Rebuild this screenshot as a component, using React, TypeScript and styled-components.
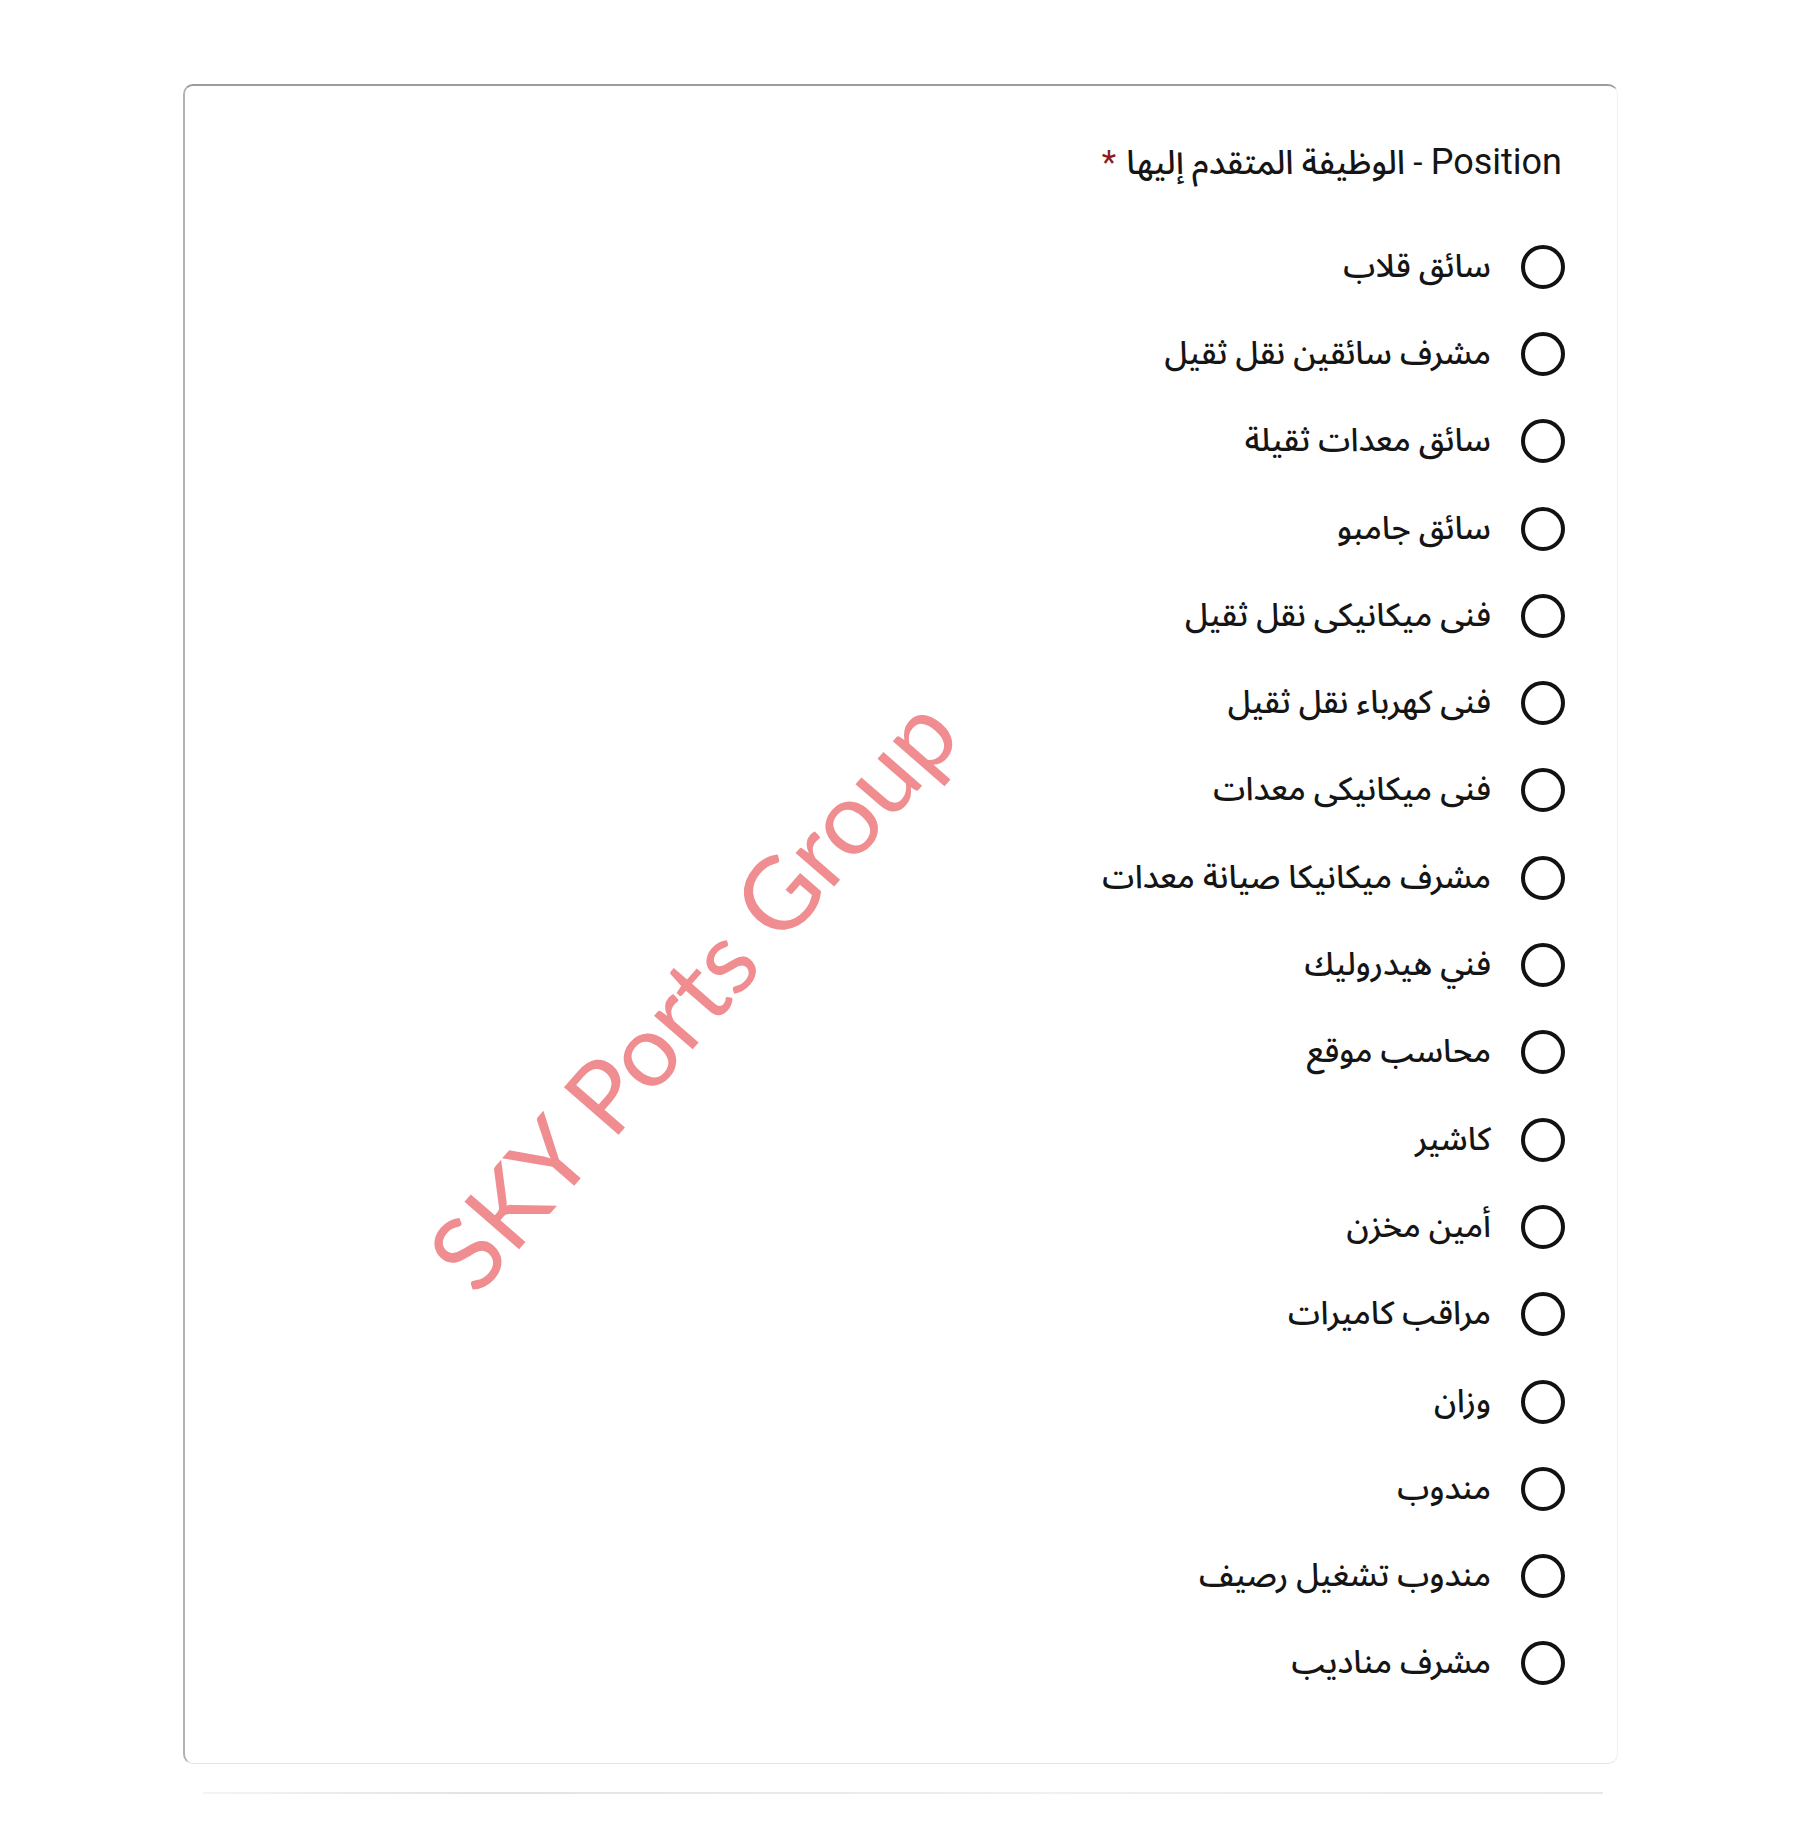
import React from 'react'
import styled, { createGlobalStyle } from 'styled-components'

const GlobalStyle = createGlobalStyle`
    html, body {
        margin: 0;
        padding: 0;
        background: #ffffff;
    }
    body {
        font-family: Roboto, "Noto Sans Arabic", "DejaVu Sans", sans-serif;
        color: #111;
    }
`

const Page = styled.div`
    width: 1796px;
    min-height: 1844px;
    padding: 84px 0 0 183px;
    box-sizing: border-box;
`

const Card = styled.div`
    position: relative;
    width: 1435px;
    height: 1680px;
    box-sizing: border-box;
    padding: 52px 52px 50px 52px;
    direction: rtl;
    background: #fff;
    border-top: 2px solid #9c9c9c;
    border-left: 2px solid #b3b3b3;
    border-right: 1px solid #efefef;
    border-bottom: 1px solid #e4e4e4;
    border-radius: 10px;
    overflow: hidden;
`

const PaperEdge = styled.div`
    width: 1400px;
    height: 2px;
    margin: 28px 0 0 20px;
    background: linear-gradient(to right, #f4f4f4, #e2e2e2 20%, #f0f0f0 60%, #e8e8e8);
`

const Title = styled.div`
    font-family: Roboto, "Noto Sans Arabic", "DejaVu Sans", sans-serif;
    font-size: 33.3px;
    line-height: 48px;
    height: 48px;
    padding-right: 3px;
    color: #151515;
`

const LatinText = styled.span`
    font-size: 36px;
`

const ArabicText = styled.span`
    font-weight: 500;
`

const Required = styled.span`
    color: #8e1b1b;
    margin-right: 2px;
`

const Options = styled.div`
    display: grid;
    grid-auto-rows: 87.3px;
    margin-top: 37px;
`

const Option = styled.label`
    display: flex;
    flex-direction: row;
    align-items: center;
    gap: 30px;
    font-size: 32.3px;
    font-weight: 500;
    color: #151515;
`

const Radio = styled.span`
    width: 44px;
    height: 44px;
    box-sizing: border-box;
    border: 4px solid #121212;
    border-radius: 50%;
    flex-shrink: 0;
`

const Watermark = styled.div`
    position: absolute;
    left: 506px;
    top: 906px;
    transform: translate(-50%, -50%) rotate(-49deg);
    direction: ltr;
    white-space: nowrap;
    font-family: Lato, "Open Sans", sans-serif;
    font-size: 101px;
    font-weight: 400;
    color: #ef8d91;
    pointer-events: none;
`

const positions = [
    'سائق قلاب',
    'مشرف سائقين نقل ثقيل',
    'سائق معدات ثقيلة',
    'سائق جامبو',
    'فنى ميكانيكى نقل ثقيل',
    'فنى كهرباء نقل ثقيل',
    'فنى ميكانيكى معدات',
    'مشرف ميكانيكا صيانة معدات',
    'فني هيدروليك',
    'محاسب موقع',
    'كاشير',
    'أمين مخزن',
    'مراقب كاميرات',
    'وزان',
    'مندوب',
    'مندوب تشغيل رصيف',
    'مشرف مناديب',
]

const App = () => {
    return (
        <Page>
            <GlobalStyle />
            <Card>
                <Title>
                    <LatinText>Position</LatinText> - <ArabicText>الوظيفة المتقدم إليها</ArabicText>
                    <Required> *</Required>
                </Title>
                <Options>
                    {positions.map((p) => (
                        <Option key={p}>
                            <Radio />
                            {p}
                        </Option>
                    ))}
                </Options>
                <Watermark>SKY Ports Group</Watermark>
            </Card>
            <PaperEdge />
        </Page>
    )
}

export default App
